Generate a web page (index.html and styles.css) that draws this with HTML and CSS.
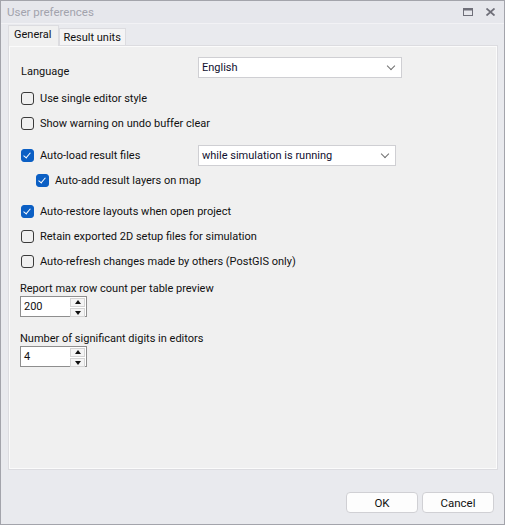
FILE: index.html
```html
<!DOCTYPE html>
<html lang="en">
    <head>
        <meta charset="UTF-8">
        <title>User preferences</title>
        <link rel="stylesheet" href="styles.css">
    </head>
    <body>
        <div class="window">
            <div class="titlebar">
                <span class="title">User preferences</span>
                <span class="tb-btn">
                    <svg width="10" height="8" viewBox="0 0 10 8"><rect x="0.5" y="0.5" width="9" height="7" fill="none" stroke="#6f6f79" stroke-width="1"/><rect x="0" y="0" width="10" height="2.5" fill="#6f6f79"/></svg>
                </span>
                <span class="tb-btn">
                    <svg width="9" height="8" viewBox="0 0 9 8"><path d="M0.5 0.5 L8.5 7.5 M8.5 0.5 L0.5 7.5" stroke="#6f6f79" stroke-width="1.8"/></svg>
                </span>
            </div>

            <div class="tabs">
                <div class="tab active">General</div>
                <div class="tab">Result units</div>
            </div>

            <div class="page">
                <div class="lang-row">
                    <span class="lang-label">Language</span>
                    <div class="select wide">English<span class="chev"></span></div>
                </div>

                <div class="row"><span class="cb"></span>Use single editor style</div>
                <div class="row"><span class="cb"></span>Show warning on undo buffer clear</div>

                <div class="row gap-top">
                    <span class="cb on"></span><span class="grow">Auto-load result files</span>
                    <div class="select">while simulation is running<span class="chev"></span></div>
                </div>
                <div class="row indent"><span class="cb on"></span>Auto-add result layers on map</div>

                <div class="row gap-top2"><span class="cb on"></span>Auto-restore layouts when open project</div>
                <div class="row"><span class="cb"></span>Retain exported 2D setup files for simulation</div>
                <div class="row"><span class="cb"></span>Auto-refresh changes made by others (PostGIS only)</div>

                <div class="field first">
                    <div class="field-label">Report max row count per table preview</div>
                    <div class="spin">200<span class="spin-btns"><span class="up"></span><span class="down"></span></span></div>
                </div>
                <div class="field">
                    <div class="field-label">Number of significant digits in editors</div>
                    <div class="spin">4<span class="spin-btns"><span class="up"></span><span class="down"></span></span></div>
                </div>
            </div>

            <div class="footer">
                <button class="btn">OK</button>
                <button class="btn">Cancel</button>
            </div>
        </div>
    </body>
</html>
```

FILE: styles.css
```css
body {
    margin: 0;
    font-family: Roboto, "Noto Sans", sans-serif;
    font-size: 11px;
    color: #111;
    background: #ffffff;
}
.window {
    width: 503px;
    height: 523px;
    border: 1px solid #a3a4ab;
    background: #e9eaee;
    display: flex;
    flex-direction: column;
}
.titlebar {
    height: 22px;
    display: flex;
    align-items: center;
    padding-left: 6px;
    padding-right: 2px;
    border-bottom: 1px solid #f2f2f5;
    background: #e6e7ec;
    font-size: 11.5px;
}
.title {
    flex: 1;
    color: #a2a3ad;
    padding-bottom: 1px;
}
.tb-btn {
    width: 23px;
    display: flex;
    justify-content: center;
    align-items: center;
}
.tabs {
    display: flex;
    align-items: flex-end;
    height: 21px;
    padding-left: 7px;
}
.tab {
    height: 16px;
    line-height: 17px;
    padding: 0 4px 0 3px;
    border: 1px solid #dcdce0;
    border-bottom: none;
    background: #f4f4f5;
}
.tab.active {
    height: 20px;
    line-height: 18px;
    padding: 0 7px 0 5px;
    background: #f0f0f0;
    position: relative;
    z-index: 1;
    margin-bottom: -1px;
}
.page {
    margin-left: 7px;
    width: 476px;
    height: 412px;
    background: #f0f0f0;
    border: 1px solid #dcdce0;
    box-shadow: inset 0 0 0 1px #fbfbfb;
    padding: 11px 0 0 12px;
}
.lang-row {
    display: flex;
    height: 21px;
    margin-bottom: 8px;
}
.lang-label {
    width: 177px;
    padding-top: 7px;
    line-height: 15px;
}
.select {
    width: 193px;
    height: 19px;
    line-height: 19px;
    padding-left: 3px;
    border: 1px solid #cfcfd3;
    background: #ffffff;
    color: #101030;
    position: relative;
}
.select.wide {
    width: 199px;
}
.chev {
    position: absolute;
    right: 7px;
    top: 5px;
    width: 5px;
    height: 5px;
    border-right: 1px solid #707070;
    border-bottom: 1px solid #707070;
    transform: rotate(45deg);
}
.row {
    display: flex;
    align-items: center;
    height: 25px;
    width: 420px;
}
.grow {
    width: 158px;
}
.row.indent {
    padding-left: 15px;
}
.gap-top {
    margin-top: 7px;
}
.gap-top2 {
    margin-top: 6px;
}
.cb {
    width: 11px;
    height: 11px;
    border: 1px solid #3a3a3a;
    border-radius: 3px;
    margin-right: 6px;
    flex-shrink: 0;
    position: relative;
}
.cb.on {
    background: #0b5fc4;
    border-color: #0b5fc4;
}
.cb.on::after {
    content: "";
    position: absolute;
    left: 3px;
    top: 1px;
    width: 3px;
    height: 6px;
    border-right: 1.3px solid #ffffff;
    border-bottom: 1.3px solid #ffffff;
    transform: rotate(40deg);
}
.field {
    margin-top: 15px;
}
.field.first {
    margin-top: 8px;
}
.field-label {
    height: 14px;
    line-height: 14px;
    margin-left: -1px;
}
.spin {
    width: 62px;
    height: 19px;
    line-height: 19px;
    padding-left: 3px;
    margin-left: -1px;
    border: 1px solid #8e8e8e;
    background: #ffffff;
    position: relative;
}
.spin-btns {
    position: absolute;
    right: 1px;
    top: 1px;
    width: 15px;
    display: flex;
    flex-direction: column;
    gap: 1px;
}
.spin-btns span {
    height: 7px;
    border: 1px solid #d4d4d4;
    background: #f4f4f4;
    position: relative;
}
.spin-btns .up::after, .spin-btns .down::after {
    content: "";
    position: absolute;
    left: 4px;
    width: 0;
    height: 0;
    border-left: 3.5px solid transparent;
    border-right: 3.5px solid transparent;
}
.spin-btns .up::after {
    top: 1px;
    border-bottom: 4px solid #111;
}
.spin-btns .down::after {
    top: 2px;
    border-top: 4px solid #111;
}
.footer {
    flex: 1;
    display: flex;
    justify-content: flex-end;
    align-items: flex-start;
    gap: 4px;
    padding-top: 22px;
    padding-right: 10px;
}
.btn {
    width: 72px;
    height: 21px;
    font-family: inherit;
    font-size: 11.5px;
    color: #111;
    background: #fdfdfd;
    border: 1px solid #d0d0d4;
    border-radius: 4px;
    padding: 0;
}
```
